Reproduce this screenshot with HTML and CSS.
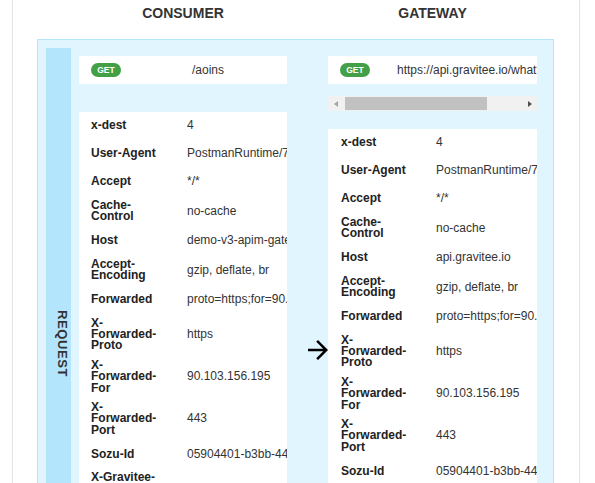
FILE: index.html
```html
<!DOCTYPE html>
<html>
<head>
<meta charset="utf-8">
<link rel="stylesheet" href="styles.css">
</head>
<body>
<div class="page">
  <div class="heads">
    <div class="head consumer-head">CONSUMER</div>
    <div class="head gateway-head">GATEWAY</div>
  </div>
  <div class="panel">
    <div class="side"><span class="side-label">REQUEST</span></div>
    <div class="col consumer">
      <div class="req-line"><span class="badge">GET</span><span class="path">/aoins</span></div>
      <div class="headers">
        <div class="row"><div class="k">x-dest</div><div class="v">4</div></div>
        <div class="row"><div class="k">User-Agent</div><div class="v">PostmanRuntime/7.26.8</div></div>
        <div class="row"><div class="k">Accept</div><div class="v">*/*</div></div>
        <div class="row"><div class="k">Cache-Control</div><div class="v">no-cache</div></div>
        <div class="row"><div class="k">Host</div><div class="v">demo-v3-apim-gateway.cleverapps.io</div></div>
        <div class="row"><div class="k">Accept-Encoding</div><div class="v">gzip, deflate, br</div></div>
        <div class="row"><div class="k">Forwarded</div><div class="v">proto=https;for=90.103.156.195</div></div>
        <div class="row"><div class="k">X-Forwarded-Proto</div><div class="v">https</div></div>
        <div class="row"><div class="k">X-Forwarded-For</div><div class="v">90.103.156.195</div></div>
        <div class="row"><div class="k">X-Forwarded-Port</div><div class="v">443</div></div>
        <div class="row"><div class="k">Sozu-Id</div><div class="v">05904401-b3bb-44c5-8e2b-5a9c1f2d7e61</div></div>
        <div class="row"><div class="k">X-Gravitee-Transaction-Id</div><div class="v">3f2c9a1e-7d44-4b8e-ac91-0e5f6b2d8c37</div></div>
      </div>
    </div>
    <div class="mid">
      <svg class="arrow" width="20" height="20" viewBox="4 4 16 16"><path d="M12 4l-1.41 1.41L16.17 11H4v2h12.17l-5.58 5.59L12 20l8-8z"/></svg>
    </div>
    <div class="col gateway">
      <div class="req-line"><span class="badge">GET</span><span class="path">https://api.gravitee.io/whattimeisit</span></div>
      <div class="scrollbar">
        <div class="sb-btn"><span class="tri-left"></span></div>
        <div class="sb-thumb"></div>
        <div class="sb-fill"></div>
        <div class="sb-btn"><span class="tri-right"></span></div>
      </div>
      <div class="headers">
        <div class="row"><div class="k">x-dest</div><div class="v">4</div></div>
        <div class="row"><div class="k">User-Agent</div><div class="v">PostmanRuntime/7.26.8</div></div>
        <div class="row"><div class="k">Accept</div><div class="v">*/*</div></div>
        <div class="row"><div class="k">Cache-Control</div><div class="v">no-cache</div></div>
        <div class="row"><div class="k">Host</div><div class="v">api.gravitee.io</div></div>
        <div class="row"><div class="k">Accept-Encoding</div><div class="v">gzip, deflate, br</div></div>
        <div class="row"><div class="k">Forwarded</div><div class="v">proto=https;for=90.103.156.195</div></div>
        <div class="row"><div class="k">X-Forwarded-Proto</div><div class="v">https</div></div>
        <div class="row"><div class="k">X-Forwarded-For</div><div class="v">90.103.156.195</div></div>
        <div class="row"><div class="k">X-Forwarded-Port</div><div class="v">443</div></div>
        <div class="row"><div class="k">Sozu-Id</div><div class="v">05904401-b3bb-44c5-8e2b-5a9c1f2d7e61</div></div>
        <div class="row"><div class="k">X-Gravitee-Transaction-Id</div><div class="v">3f2c9a1e-7d44-4b8e-ac91-0e5f6b2d8c37</div></div>
      </div>
    </div>
  </div>
</div>
</body>
</html>
```
FILE: styles.css
```css
html, body {
  margin: 0;
  height: 100%;
  overflow: hidden;
  background: #fff;
}
body {
  font-family: "Liberation Sans", Arial, sans-serif;
  color: #222;
}
.page {
  margin: 0 15px 0 12px;
  border-left: 1px solid #e3e3e3;
  border-right: 1px solid #e3e3e3;
  min-height: 100%;
}
.heads {
  display: flex;
  height: 39px;
  box-sizing: border-box;
  padding: 5px 0 0 66px;
}
.head {
  font-size: 14px;
  font-weight: bold;
  line-height: 16px;
  text-align: center;
  color: #333;
}
.consumer-head { width: 208px; margin-right: 41px; }
.gateway-head { width: 209px; }

.panel {
  margin-left: 24px;
  width: 517px;
  height: 800px;
  box-sizing: border-box;
  border: 1px solid #b3e5fc;
  background: #e1f5fe;
  padding: 8px 16px 8px 8px;
  display: flex;
  align-items: flex-start;
}
.side {
  flex: none;
  width: 25px;
  height: 700px;
  background: #b3e5fc;
  margin-right: 8px;
}
.side-label {
  display: block;
  writing-mode: vertical-rl;
  margin-top: 262px;
  padding-left: 9px;
  font-size: 13px;
  font-weight: bold;
  line-height: 14px;
  letter-spacing: 0.6px;
  color: #333;
}
.col {
  flex: none;
  padding-top: 8px;
}
.consumer { width: 208px; }
.gateway { width: 209px; }

.req-line {
  background: #fff;
  height: 28px;
  display: flex;
  align-items: center;
  padding-left: 12px;
  overflow: hidden;
  white-space: nowrap;
}
.badge {
  flex: none;
  width: 30px;
  height: 14px;
  border-radius: 7px;
  background: #43a047;
  color: #fff;
  font-size: 8.5px;
  font-weight: bold;
  display: flex;
  align-items: center;
  justify-content: center;
}
.path {
  flex: 1;
  text-align: center;
  margin-left: 29px;
  padding-right: 21px;
  font-size: 12px;
  color: #333;
}
.gateway .path { margin-left: 27px; }
.consumer .req-line { margin-bottom: 28px; }
.gateway .req-line { margin-bottom: 12px; }

.scrollbar {
  height: 15px;
  background: #f1f1f1;
  display: flex;
  align-items: center;
  margin-bottom: 18px;
}
.sb-btn {
  flex: none;
  width: 15px;
  height: 15px;
  display: flex;
  align-items: center;
  justify-content: center;
}
.tri-left {
  width: 0;
  height: 0;
  border-top: 3.5px solid transparent;
  border-bottom: 3.5px solid transparent;
  border-right: 4px solid #a3a3a3;
}
.tri-right {
  width: 0;
  height: 0;
  border-top: 3.5px solid transparent;
  border-bottom: 3.5px solid transparent;
  border-left: 4px solid #505050;
}
.sb-thumb {
  flex: none;
  margin-left: 2px;
  width: 142px;
  height: 13px;
  background: #c1c1c1;
}
.sb-fill { flex: 1; }

.headers {
  background: #fff;
  overflow: hidden;
}
.row {
  display: flex;
  align-items: center;
  min-height: 28px;
  box-sizing: border-box;
  padding: 4px 0;
}
.k {
  flex: none;
  width: 72px;
  padding: 0 12px;
  font-size: 12px;
  font-weight: bold;
  line-height: 11.4px;
  color: #222;
}
.gateway .k { padding-left: 13px; padding-right: 11px; }
.v {
  padding-left: 12px;
  white-space: nowrap;
  font-size: 12px;
  line-height: 11.4px;
  color: #333;
}

.mid {
  flex: none;
  width: 41px;
  padding-top: 292px;
}
.arrow {
  display: block;
  margin-left: 21px;
  fill: #000;
}
```
